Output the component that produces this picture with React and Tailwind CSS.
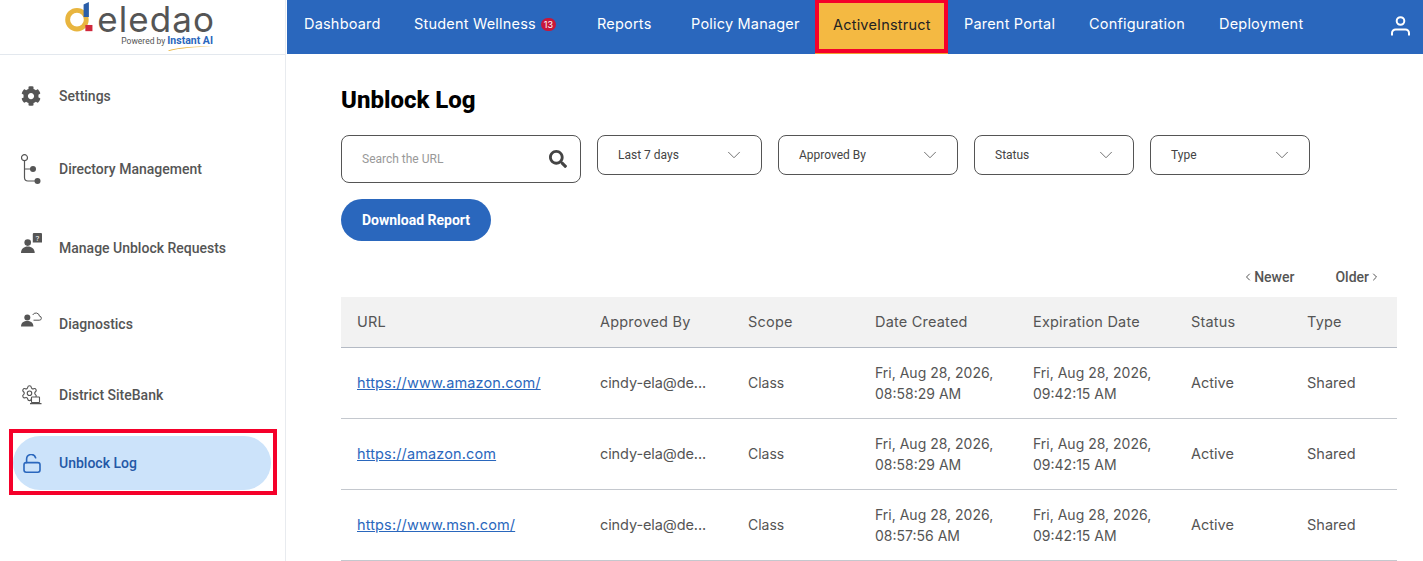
import { FaCog, FaSearch } from 'react-icons/fa';
import { ChevronDown, ChevronLeft, ChevronRight } from 'lucide-react';

const navItems = [
  { label: 'Dashboard', width: 'w-[110px]' },
  { label: 'Student Wellness', width: 'w-[183px]', badge: '13' },
  { label: 'Reports', width: 'w-[94px]' },
  { label: 'Policy Manager', width: 'w-[141px]' },
  { label: 'ActiveInstruct', width: 'w-[133px]', active: true },
  { label: 'Parent Portal', width: 'w-[125px]' },
  { label: 'Configuration', width: 'w-[130px]' },
  { label: 'Deployment', width: 'w-[130px]' },
];

const DirectoryIcon = () => (
  <svg width="20" height="30" viewBox="0 0 20 30" fill="none" stroke="#555" strokeWidth="1.2">
    <circle cx="3.5" cy="3.7" r="3" />
    <path d="M3.5 6.7V23.5a3.5 3.5 0 0 0 3.5 3.5H14M3.5 15H10" />
    <circle cx="12" cy="15" r="3" fill="#555" stroke="none" />
    <circle cx="16.5" cy="27" r="3" fill="#555" stroke="none" />
  </svg>
);

const ManageIcon = () => (
  <svg width="21" height="20" viewBox="0 0 21 20" fill="#555">
    <circle cx="6.7" cy="9.6" r="3.3" />
    <path d="M0 20c0-4.2 3-6.4 6.8-6.4s6.9 2.2 6.9 6.4z" />
    <path d="M11.8 1a1 1 0 0 1 1-1h7.2a1 1 0 0 1 1 1v8.5h-9.2z" />
    <text x="16.4" y="8" fontSize="8" fontFamily="Roboto, sans-serif" fill="#fff" textAnchor="middle">?</text>
  </svg>
);

const DiagnosticsIcon = () => (
  <svg width="21" height="15" viewBox="0 0 21 15" fill="none">
    <circle cx="6.3" cy="5.4" r="3" fill="#555" />
    <path d="M0 14.5c0-3.6 2.8-5.4 6.2-5.4s6.2 1.8 6.2 5.4z" fill="#555" />
    <path d="M12.5 8.2h5.7a2 2 0 0 0 .3-4 3.6 3.6 0 0 0-6.8-1.2" stroke="#555" strokeWidth="1" />
  </svg>
);

const SiteBankIcon = () => (
  <svg width="21" height="20" viewBox="0 0 21 20" fill="none" stroke="#555" strokeWidth="1.1">
    <g transform="translate(-0.5 -0.8) scale(0.75)" strokeWidth="1.5">
      <path d="M9.671 4.136a2.34 2.34 0 0 1 4.659 0 2.34 2.34 0 0 0 3.319 1.915 2.34 2.34 0 0 1 2.33 4.033 2.34 2.34 0 0 0 0 3.831 2.34 2.34 0 0 1-2.33 4.033 2.34 2.34 0 0 0-3.319 1.915 2.34 2.34 0 0 1-4.659 0 2.34 2.34 0 0 0-3.32-1.915 2.34 2.34 0 0 1-2.33-4.033 2.34 2.34 0 0 0 0-3.831A2.34 2.34 0 0 1 6.35 6.051a2.34 2.34 0 0 0 3.319-1.915" />
      <circle cx="12" cy="12" r="3" />
    </g>
    <rect x="10.5" y="12" width="8" height="5.6" rx="0.6" fill="#fff" />
    <path d="M9 18.6h11.5" strokeWidth="1.3" />
  </svg>
);

const UnlockIcon = () => (
  <svg width="18" height="19" viewBox="0 0 18 19" fill="none" stroke="#2a67bd" strokeWidth="1.6">
    <rect x="1" y="8.6" width="16" height="9.6" rx="2.2" />
    <path d="M3.6 8.6V5a4.6 4.6 0 0 1 9-1.2" strokeLinecap="round" />
  </svg>
);

const UserIcon = () => (
  <svg width="19" height="20" viewBox="0 0 19 20" fill="none" stroke="#fff" strokeWidth="2">
    <circle cx="9.5" cy="5" r="3.8" />
    <path d="M1 19.5V17a3.6 3.6 0 0 1 3.6-3.6h9.8A3.6 3.6 0 0 1 18 17v2.5" />
  </svg>
);

const sideItems = [
  { label: 'Settings', icon: <FaCog size={20} color="#555" />, gap: 'mt-[14px]' },
  { label: 'Directory Management', icon: <DirectoryIcon />, gap: 'mt-[19px]' },
  { label: 'Manage Unblock Requests', icon: <ManageIcon />, gap: 'mt-[25px]', lift: '-mt-[10px]' },
  { label: 'Diagnostics', icon: <DiagnosticsIcon />, gap: 'mt-[22px]', lift: '-mt-[10px]' },
  { label: 'District SiteBank', icon: <SiteBankIcon />, gap: 'mt-[17px]' },
];

const filters = [
  { label: 'Last 7 days', width: 'w-[165px]' },
  { label: 'Approved By', width: 'w-[180px]' },
  { label: 'Status', width: 'w-[160px]' },
  { label: 'Type', width: 'w-[160px]' },
];

const rows = [
  { url: 'https://www.amazon.com/', created: ['Fri, Aug 28, 2026,', '08:58:29 AM'] },
  { url: 'https://amazon.com', created: ['Fri, Aug 28, 2026,', '08:58:29 AM'] },
  { url: 'https://www.msn.com/', created: ['Fri, Aug 28, 2026,', '08:57:56 AM'] },
];

const headers = ['URL', 'Approved By', 'Scope', 'Date Created', 'Expiration Date', 'Status', 'Type'];

const Logo = () => (
  <div className="w-[150px] h-[54px] ml-[65px]">
    <div className="flex h-[36px]">
      <svg width="32" height="34" viewBox="0 0 32 34">
        <circle cx="13.5" cy="20" r="10.5" fill="none" stroke="#e8b53f" strokeWidth="5.5" />
        <polygon points="21,3 27,0 27,17 21,17" fill="#2a5ea8" />
        <rect x="23" y="26" width="8" height="7" fill="#d0283c" />
      </svg>
      <span className="ml-[4px] mt-[4px] h-[30px] font-['Inter',sans-serif] text-[35px] leading-[30px] tracking-[0.03em] text-[#555]">eledao</span>
    </div>
    <div className="flex items-baseline justify-end pr-[2px] h-[9px] leading-[9px]">
      <span className="font-['Roboto',sans-serif] text-[8.5px] text-[#555] mr-[2px]">Powered by</span>
      <span className="font-['Roboto',sans-serif] font-bold text-[10.5px] text-[#2a67bd]">Instant AI</span>
    </div>
    <svg className="ml-[103px]" width="46" height="6" viewBox="0 0 46 6">
      <path d="M0 5.5C10 2 28 1 45 1.5 28 2 12 3 1 6z" fill="#e8b53f" />
    </svg>
  </div>
);

const App = () => {
  return (
    <div className="h-[561px] w-[1423px] overflow-hidden bg-white flex font-['Roboto',sans-serif]">
      <aside className="w-[287px] shrink-0">
        <div className="w-[286px] h-full border-r border-[#e8ebef] flex flex-col">
          <div className="h-[55px] border-b border-[#e3e8ee]">
            <Logo />
          </div>
          {sideItems.map((item) => (
            <div key={item.label} className={`${item.gap} h-[54px] flex items-center pl-[21px]`}>
              <div className={`w-[38px] shrink-0 ${item.lift || ''}`}>{item.icon}</div>
              <span className="text-sm font-medium text-[#555]">{item.label}</span>
            </div>
          ))}
          <div className="mt-[7px] ml-[9px] w-[268px] h-[66px] border-4 border-[#f5002a] pt-[3px] pr-[2px] pb-px">
            <div className="h-[54px] bg-[#cce3fa] rounded-full flex items-center pl-[10px]">
              <div className="w-[36px] shrink-0"><UnlockIcon /></div>
              <span className="text-sm font-medium text-[#2458a6]">Unblock Log</span>
            </div>
          </div>
        </div>
      </aside>

      <div className="flex-1 min-w-0 flex flex-col">
        <nav className="h-[54px] bg-[#2a67bd] flex items-stretch font-['Inter',sans-serif] text-[14.5px] tracking-[0.2px] text-white shrink-0">
          {navItems.map((item) =>
            item.active ? (
              <div key={item.label} className={`${item.width} -mr-px border-b border-[#f0a030]`}>
                <div className="h-full border-4 border-t-[3px] border-[#f5002a] bg-[#f4b942] text-[#222] flex items-center pl-[14px] pb-[3px]">
                  {item.label}
                </div>
              </div>
            ) : (
              <div key={item.label} className={`${item.width} flex items-center pl-[17px] pb-[6px]`}>
                {item.label}
                {item.badge && (
                  <span className="ml-[5px] w-[15px] h-[13px] rounded-full bg-[#c8173a] text-[9px] tracking-normal leading-[13px] text-center">{item.badge}</span>
                )}
              </div>
            )
          )}
          <div className="ml-auto pr-[13px] flex items-center pb-[3px]">
            <UserIcon />
          </div>
        </nav>

        <main className="pl-[54px] pr-[26px]">
          <h1 className="mt-[31px] text-[24px] leading-[30px] font-[800] text-black">Unblock Log</h1>
          <div className="mt-[20px] flex items-start gap-4">
            <div className="w-[240px] h-[48px] border border-[#555] rounded-lg flex items-center justify-between pl-[20px] pr-[13px]">
              <span className="text-xs text-[#999]">Search the URL</span>
              <FaSearch size={18} color="#444" />
            </div>
            {filters.map((f) => (
              <div key={f.label} className={`${f.width} h-[40px] border border-[#555] rounded-lg flex items-center justify-between pl-[20px] pr-[16px]`}>
                <span className="text-xs text-[#444]">{f.label}</span>
                <ChevronDown size={22} strokeWidth={1} color="#666" />
              </div>
            ))}
          </div>
          <button className="block mt-[16px] w-[150px] h-[42px] rounded-full bg-[#2a67bd] text-white text-sm font-bold">Download Report</button>
          <div className="mt-[28px] h-[16px] flex justify-end items-center text-sm font-medium text-[#555] pr-[16px]">
            <span className="flex items-center"><ChevronLeft size={12} strokeWidth={2} />Newer</span>
            <span className="flex items-center ml-[41px]">Older<ChevronRight size={12} strokeWidth={2} /></span>
          </div>
          <table className="mt-[12px] w-[1056px] table-fixed border-collapse font-['Inter',sans-serif] text-[14.5px] text-[#555]">
            <colgroup>
              <col className="w-[243px]" />
              <col className="w-[148px]" />
              <col className="w-[127px]" />
              <col className="w-[158px]" />
              <col className="w-[158px]" />
              <col className="w-[116px]" />
              <col className="w-[106px]" />
            </colgroup>
            <thead>
              <tr className="h-[50px] bg-[#f2f2f2] border-b border-[#b4bac4]">
                {headers.map((h) => (
                  <th key={h} className="pl-4 text-left font-normal tracking-[0.2px]">{h}</th>
                ))}
              </tr>
            </thead>
            <tbody>
              {rows.map((r) => (
                <tr key={r.url} className="h-[71px] border-b border-[#c4c8ce]">
                  <td className="pl-4 tracking-[0.13px]"><a className="text-[#2a67bd] underline" href="#">{r.url}</a></td>
                  <td className="pl-4 tracking-[-0.1px]">cindy-ela@de...</td>
                  <td className="pl-4 text-sm">Class</td>
                  <td className="pl-4 text-sm leading-[21px]">{r.created[0]}<br />{r.created[1]}</td>
                  <td className="pl-4 text-sm leading-[21px]">Fri, Aug 28, 2026,<br />09:42:15 AM</td>
                  <td className="pl-4">Active</td>
                  <td className="pl-4">Shared</td>
                </tr>
              ))}
            </tbody>
          </table>
        </main>
      </div>
    </div>
  );
};

export default App;
